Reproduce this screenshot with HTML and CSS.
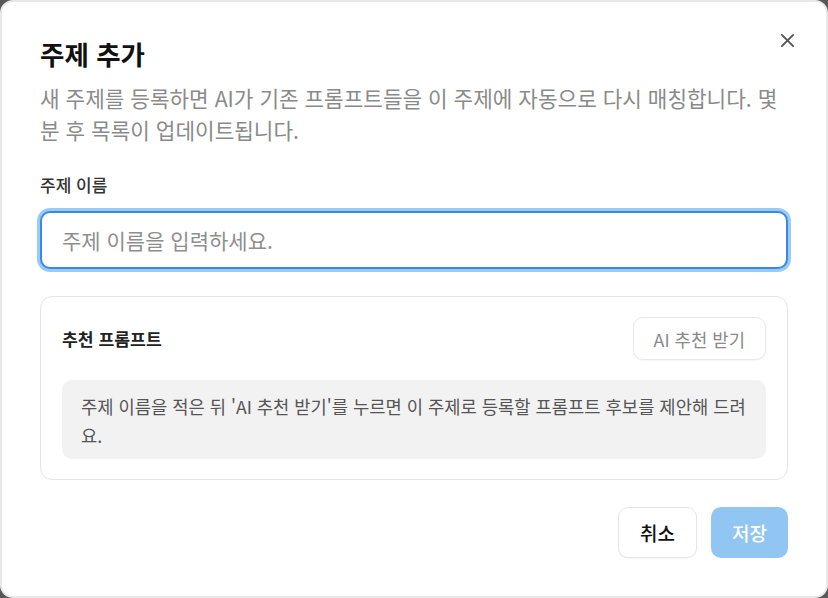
FILE: index.html
```html
<!DOCTYPE html>
<html lang="ko">
<head>
<meta charset="utf-8">
<link rel="stylesheet" href="styles.css">
</head>
<body>
<div class="modal">
  <div class="head">
    <h2 class="title">주제 추가</h2>
    <button class="close" aria-label="닫기">
      <svg width="16" height="16" viewBox="0 0 16 16"><path d="M2 2L14 14M14 2L2 14" stroke="#555" stroke-width="2" stroke-linecap="round" fill="none"/></svg>
    </button>
  </div>
  <p class="desc">새 주제를 등록하면 AI가 기존 프롬프트들을 이 주제에 자동으로 다시 매칭합니다. 몇 분 후 목록이 업데이트됩니다.</p>
  <label class="label" for="topic">주제 이름</label>
  <input id="topic" class="input" type="text" placeholder="주제 이름을 입력하세요.">
  <section class="card">
    <div class="card-head">
      <span class="card-title">추천 프롬프트</span>
      <button class="ai-btn">AI 추천 받기</button>
    </div>
    <div class="info">주제 이름을 적은 뒤 'AI 추천 받기'를 누르면 이 주제로 등록할 프롬프트 후보를 제안해 드려요.</div>
  </section>
  <div class="footer">
    <button class="btn cancel">취소</button>
    <button class="btn save">저장</button>
  </div>
</div>
</body>
</html>
```
FILE: styles.css
```css
* { box-sizing: border-box; }
html, body { margin: 0; padding: 0; }
body {
  width: 828px;
  height: 598px;
  background: #585858;
  font-family: "Noto Sans CJK KR", "Noto Sans", sans-serif;
  overflow: hidden;
}
.modal {
  width: 828px;
  height: 598px;
  background: #fff;
  border: 2px solid #e9e9e9;
  border-radius: 13px;
  padding: 35px 38px 0 38px;
  display: flex;
  flex-direction: column;
}
.head {
  display: flex;
  justify-content: space-between;
  align-items: flex-start;
}
.title {
  margin: 0;
  font-size: 26.5px;
  line-height: 34px;
  font-weight: 700;
  color: #111;
}
.close {
  border: 0;
  background: none;
  padding: 0;
  margin: -7px -9px 0 0;
  width: 20px;
  height: 20px;
  display: flex;
  align-items: center;
  justify-content: center;
}
.close svg { width: 15px; height: 15px; }
.desc {
  margin: 11px 0 0;
  font-size: 21.3px;
  line-height: 32px;
  color: #8a8a8a;
}
.label {
  margin-top: 27px;
  font-size: 17px;
  line-height: 24px;
  color: #333;
  font-weight: 500;
}
.input {
  margin-top: 14px;
  width: 748px;
  height: 58px;
  border: 2px solid #3a88e4;
  border-radius: 10px;
  box-shadow: 0 0 0 3px #98cbf6;
  padding: 0 20px;
  font-family: inherit;
  font-size: 21px;
  color: #222;
  outline: none;
}
.input::placeholder { color: #8e8e8e; }
.card {
  margin-top: 27px;
  border: 1px solid #e4e4e4;
  border-radius: 12px;
  padding: 20px 21px;
  display: flex;
  flex-direction: column;
  gap: 20px;
}
.card-head {
  display: flex;
  justify-content: space-between;
  align-items: center;
}
.card-title {
  font-size: 17.2px;
  font-weight: 700;
  color: #222;
}
.ai-btn {
  height: 43px;
  padding: 0 20px;
  border: 1px solid #e8e8e8;
  border-radius: 10px;
  background: #fff;
  box-shadow: 0 1px 2px rgba(0,0,0,0.04);
  font-family: inherit;
  font-size: 17.8px;
  color: #8a8a8a;
}
.info {
  background: #f2f2f2;
  border-radius: 10px;
  padding: 12px 14px 9px 19px;
  font-size: 17.7px;
  line-height: 29px;
  color: #555;
}
.footer {
  margin-top: 27px;
  display: flex;
  justify-content: flex-end;
  gap: 14px;
}
.btn {
  height: 51px;
  border-radius: 10px;
  font-family: inherit;
  font-size: 19px;
  font-weight: 500;
  padding: 0;
}
.cancel {
  width: 79px;
  border: 1px solid #e6e6e6;
  background: #fff;
  color: #111;
  box-shadow: 0 1px 2px rgba(0,0,0,0.04);
}
.save {
  width: 77px;
  border: 0;
  background: #91c6f3;
  color: #fff;
}
```
